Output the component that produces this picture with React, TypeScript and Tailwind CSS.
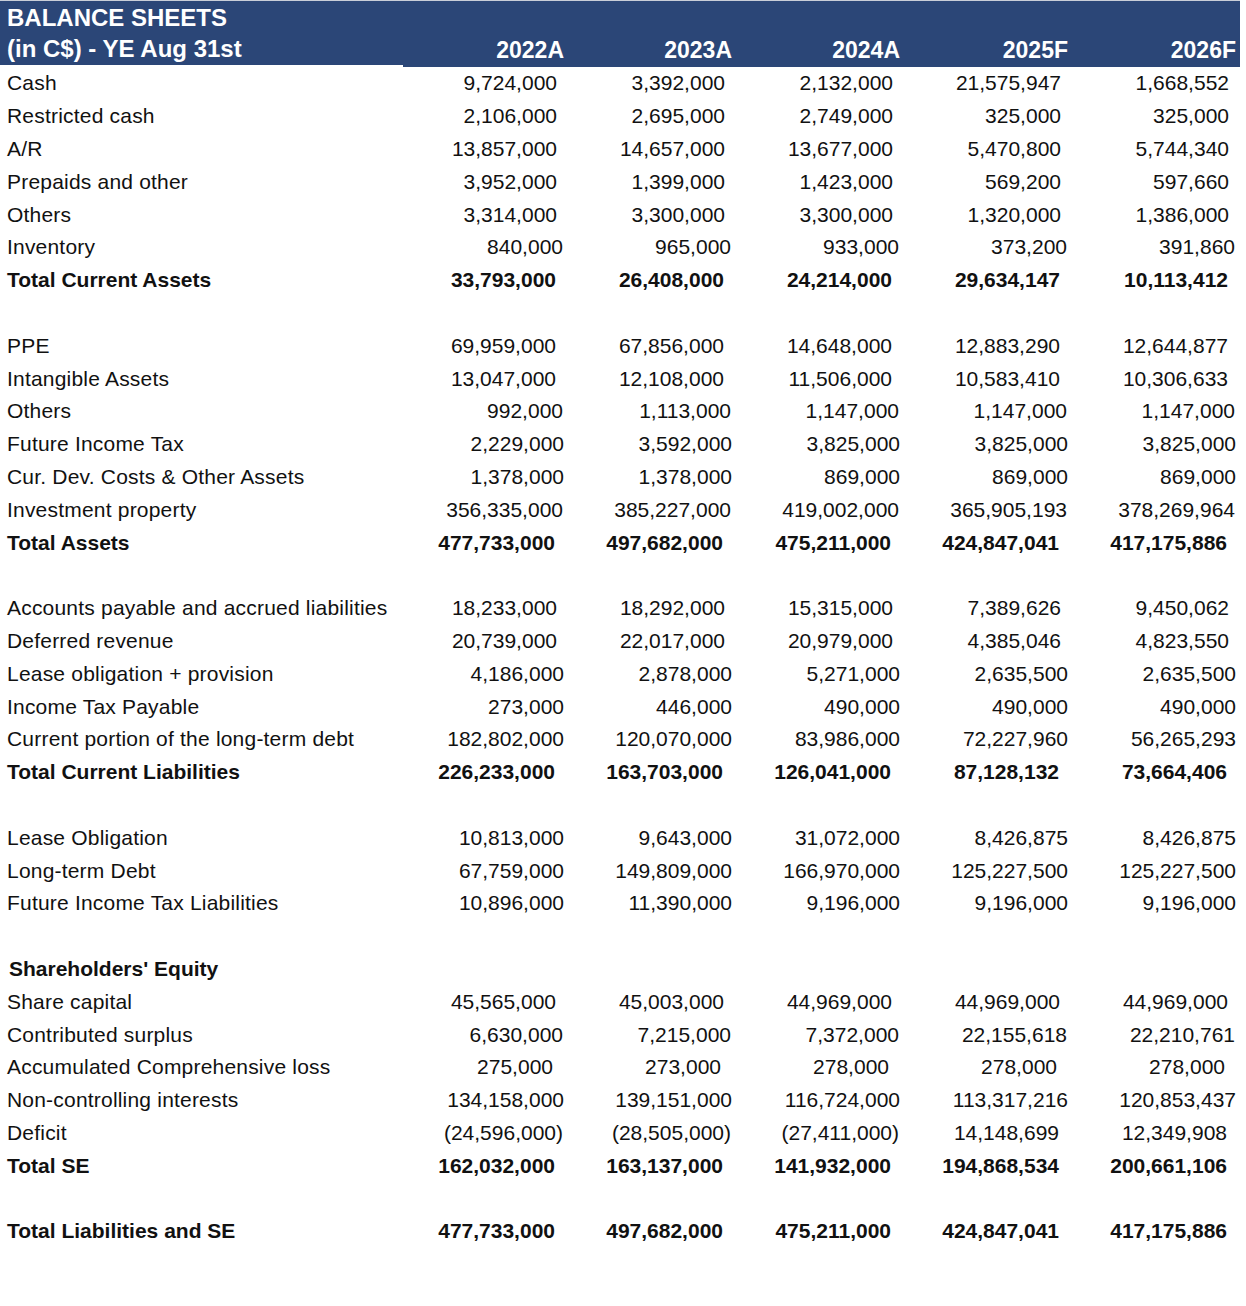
import React from 'react';

type Line =
  | { kind: 'blank' }
  | { kind: 'row'; label: string; values?: string[]; bold?: boolean; pad: string };

// pad = right inset of the figures in that row (the source sheet was not perfectly aligned)
const lines: Line[] = [
  { kind: 'row', label: 'Cash', values: ['9,724,000', '3,392,000', '2,132,000', '21,575,947', '1,668,552'], pad: 'pr-[8px]' },
  { kind: 'row', label: 'Restricted cash', values: ['2,106,000', '2,695,000', '2,749,000', '325,000', '325,000'], pad: 'pr-[8px]' },
  { kind: 'row', label: 'A/R', values: ['13,857,000', '14,657,000', '13,677,000', '5,470,800', '5,744,340'], pad: 'pr-[8px]' },
  { kind: 'row', label: 'Prepaids and other', values: ['3,952,000', '1,399,000', '1,423,000', '569,200', '597,660'], pad: 'pr-[8px]' },
  { kind: 'row', label: 'Others', values: ['3,314,000', '3,300,000', '3,300,000', '1,320,000', '1,386,000'], pad: 'pr-[8px]' },
  { kind: 'row', label: 'Inventory', values: ['840,000', '965,000', '933,000', '373,200', '391,860'], pad: 'pr-[2px]' },
  { kind: 'row', label: 'Total Current Assets', values: ['33,793,000', '26,408,000', '24,214,000', '29,634,147', '10,113,412'], bold: true, pad: 'pr-[9px]' },
  { kind: 'blank' },
  { kind: 'row', label: 'PPE', values: ['69,959,000', '67,856,000', '14,648,000', '12,883,290', '12,644,877'], pad: 'pr-[9px]' },
  { kind: 'row', label: 'Intangible Assets', values: ['13,047,000', '12,108,000', '11,506,000', '10,583,410', '10,306,633'], pad: 'pr-[9px]' },
  { kind: 'row', label: 'Others', values: ['992,000', '1,113,000', '1,147,000', '1,147,000', '1,147,000'], pad: 'pr-[2px]' },
  { kind: 'row', label: 'Future Income Tax', values: ['2,229,000', '3,592,000', '3,825,000', '3,825,000', '3,825,000'], pad: 'pr-[1px]' },
  { kind: 'row', label: 'Cur. Dev. Costs & Other Assets', values: ['1,378,000', '1,378,000', '869,000', '869,000', '869,000'], pad: 'pr-[1px]' },
  { kind: 'row', label: 'Investment property', values: ['356,335,000', '385,227,000', '419,002,000', '365,905,193', '378,269,964'], pad: 'pr-[2px]' },
  { kind: 'row', label: 'Total Assets', values: ['477,733,000', '497,682,000', '475,211,000', '424,847,041', '417,175,886'], bold: true, pad: 'pr-[10px]' },
  { kind: 'blank' },
  { kind: 'row', label: 'Accounts payable and accrued liabilities', values: ['18,233,000', '18,292,000', '15,315,000', '7,389,626', '9,450,062'], pad: 'pr-[8px]' },
  { kind: 'row', label: 'Deferred revenue', values: ['20,739,000', '22,017,000', '20,979,000', '4,385,046', '4,823,550'], pad: 'pr-[8px]' },
  { kind: 'row', label: 'Lease obligation + provision', values: ['4,186,000', '2,878,000', '5,271,000', '2,635,500', '2,635,500'], pad: 'pr-[1px]' },
  { kind: 'row', label: 'Income Tax Payable', values: ['273,000', '446,000', '490,000', '490,000', '490,000'], pad: 'pr-[1px]' },
  { kind: 'row', label: 'Current portion of the long-term debt', values: ['182,802,000', '120,070,000', '83,986,000', '72,227,960', '56,265,293'], pad: 'pr-[1px]' },
  { kind: 'row', label: 'Total Current Liabilities', values: ['226,233,000', '163,703,000', '126,041,000', '87,128,132', '73,664,406'], bold: true, pad: 'pr-[10px]' },
  { kind: 'blank' },
  { kind: 'row', label: 'Lease Obligation', values: ['10,813,000', '9,643,000', '31,072,000', '8,426,875', '8,426,875'], pad: 'pr-[1px]' },
  { kind: 'row', label: 'Long-term Debt', values: ['67,759,000', '149,809,000', '166,970,000', '125,227,500', '125,227,500'], pad: 'pr-[1px]' },
  { kind: 'row', label: 'Future Income Tax Liabilities', values: ['10,896,000', '11,390,000', '9,196,000', '9,196,000', '9,196,000'], pad: 'pr-[1px]' },
  { kind: 'blank' },
  { kind: 'row', label: "Shareholders' Equity", bold: true, pad: 'pr-[1px]' },
  { kind: 'row', label: 'Share capital', values: ['45,565,000', '45,003,000', '44,969,000', '44,969,000', '44,969,000'], pad: 'pr-[9px]' },
  { kind: 'row', label: 'Contributed surplus', values: ['6,630,000', '7,215,000', '7,372,000', '22,155,618', '22,210,761'], pad: 'pr-[2px]' },
  { kind: 'row', label: 'Accumulated Comprehensive loss', values: ['275,000', '273,000', '278,000', '278,000', '278,000'], pad: 'pr-[12px]' },
  { kind: 'row', label: 'Non-controlling interests', values: ['134,158,000', '139,151,000', '116,724,000', '113,317,216', '120,853,437'], pad: 'pr-[1px]' },
  { kind: 'row', label: 'Deficit', values: ['(24,596,000)', '(28,505,000)', '(27,411,000)', '14,148,699', '12,349,908'], pad: 'pr-[10px]' },
  { kind: 'row', label: 'Total SE', values: ['162,032,000', '163,137,000', '141,932,000', '194,868,534', '200,661,106'], bold: true, pad: 'pr-[10px]' },
  { kind: 'blank' },
  { kind: 'row', label: 'Total Liabilities and SE', values: ['477,733,000', '497,682,000', '475,211,000', '424,847,041', '417,175,886'], bold: true, pad: 'pr-[10px]' },
];

const years = ['2022A', '2023A', '2024A', '2025F', '2026F'];

const gridCols = 'grid grid-cols-[403px_162px_repeat(4,168px)_3px]';

export default function App() {
  return (
    <div className="min-h-[1306px] w-[1246px] bg-white font-['Liberation_Sans',Arial,sans-serif] text-[#111]">
      <div className="w-[1240px] border-t border-[#c9ced8]">
        {/* header band */}
        <div className="bg-[#2b4677] text-white font-bold">
          <div className={`${gridCols} h-[32.8px] items-center`}>
            <div className="pl-[7px] pt-[2px] text-[24px] leading-none">BALANCE SHEETS</div>
          </div>
          <div className={`${gridCols} h-[32.8px]`}>
            <div className="flex items-center border-b-2 border-white pl-[7px] text-[24px] leading-none">
              (in C$) - YE Aug 31st
            </div>
            {years.map((y) => (
              <div key={y} className="flex items-center justify-end pr-[1px] text-[23px] leading-none">
                {y}
              </div>
            ))}
            <div />
          </div>
        </div>

        {/* body */}
        {lines.map((line, i) =>
          line.kind === 'blank' ? (
            <div key={i} className="h-[32.8px]" />
          ) : (
            <div key={i} className={`${gridCols} h-[32.8px] items-center text-[21px] leading-none`}>
              <div
                className={`whitespace-nowrap ${
                  line.bold ? (line.values ? 'pl-[7px] font-bold' : 'pl-[9px] font-bold') : 'pl-[7px] tracking-[0.2px]'
                }`}
              >
                {line.label}
              </div>
              {line.values?.map((v, j) => (
                <div
                  key={j}
                  className={`text-right whitespace-nowrap ${v.startsWith('(') ? 'pr-[2px]' : line.pad} ${line.bold ? 'font-bold' : ''}`}
                >
                  {v}
                </div>
              ))}
            </div>
          ),
        )}
      </div>
    </div>
  );
}
